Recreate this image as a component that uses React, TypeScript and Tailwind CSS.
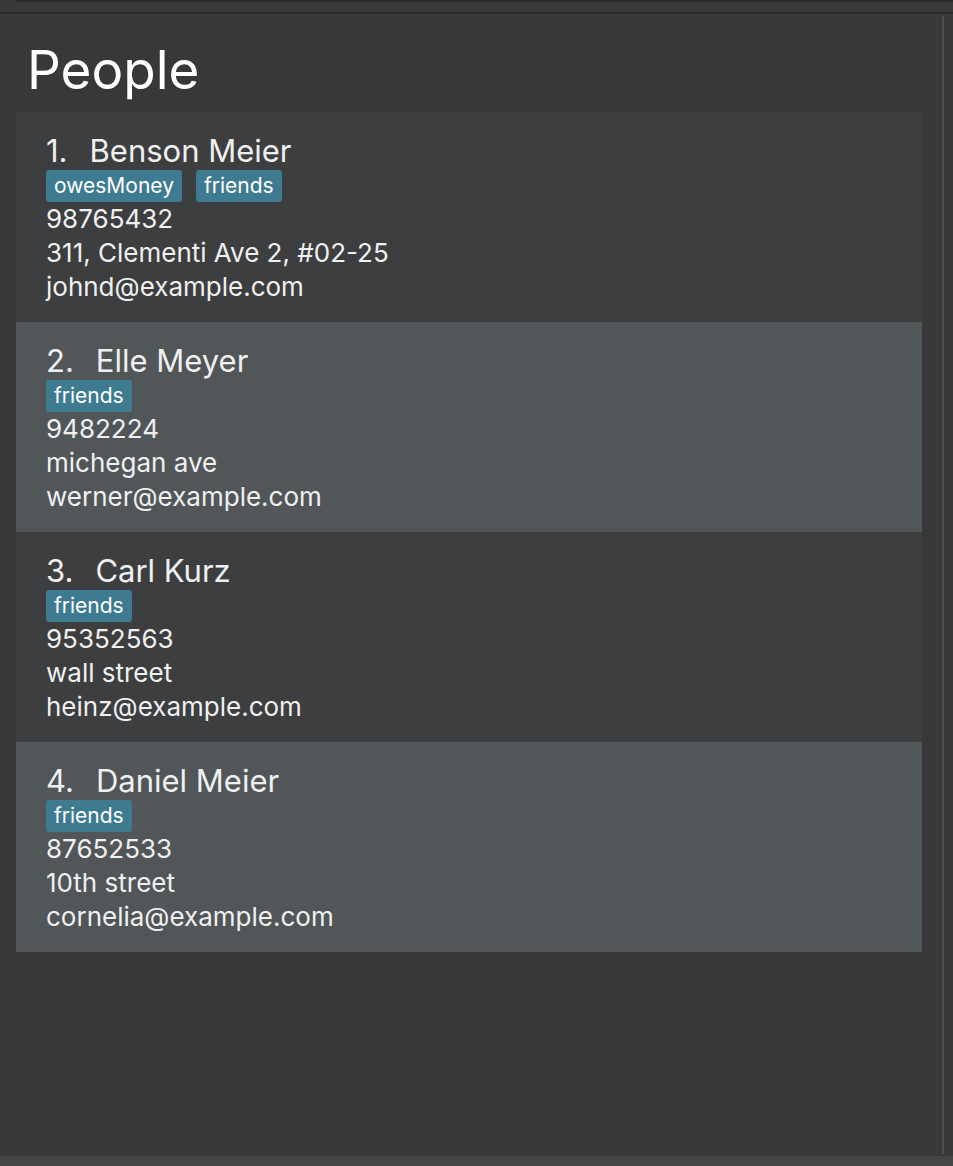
import React from "react";

type Person = {
  name: string;
  tags: string[];
  phone: string;
  address: string;
  email: string;
};

const people: Person[] = [
  {
    name: "Benson Meier",
    tags: ["owesMoney", "friends"],
    phone: "98765432",
    address: "311, Clementi Ave 2, #02-25",
    email: "johnd@example.com",
  },
  {
    name: "Elle Meyer",
    tags: ["friends"],
    phone: "9482224",
    address: "michegan ave",
    email: "werner@example.com",
  },
  {
    name: "Carl Kurz",
    tags: ["friends"],
    phone: "95352563",
    address: "wall street",
    email: "heinz@example.com",
  },
  {
    name: "Daniel Meier",
    tags: ["friends"],
    phone: "87652533",
    address: "10th street",
    email: "cornelia@example.com",
  },
];

function PersonCard({ person, index }: { person: Person; index: number }) {
  const bg = index % 2 === 0 ? "bg-[#3c3e3f]" : "bg-[#515658]";
  return (
    <li className={`${bg} h-[210px] px-[30px] pt-[24px] text-[#f0f0f0]`}>
      <div className="flex gap-[22px] text-[31px] leading-[30px]">
        <span>{index + 1}.</span>
        <span>{person.name}</span>
      </div>
      <div className="mt-[4px] flex gap-[14px]">
        {person.tags.map((tag) => (
          <span
            key={tag}
            className="h-[32px] rounded-[3px] bg-[#3e7b91] px-[8px] text-[21px] leading-[32px] text-white"
          >
            {tag}
          </span>
        ))}
      </div>
      <div className="text-[26px] leading-[34px]">
        <p>{person.phone}</p>
        <p>{person.address}</p>
        <p>{person.email}</p>
      </div>
    </li>
  );
}

export default function App() {
  return (
    <div className="flex h-[1166px] w-[953px] flex-col bg-[#383838] font-['Inter',sans-serif]">
      <div className="ml-[16px] h-[2px] bg-[#2b2b2b]" />
      <div className="h-[10px]" />
      <div className="h-[2px] bg-[#2b2b2b]" />
      <div className="flex flex-1">
        <main className="w-[922px] pl-[16px]">
          <h1 className="pl-[11px] pt-[30px] pb-[16px] text-[53px] leading-[52px] text-white">
            People
          </h1>
          <ul>
            {people.map((p, i) => (
              <PersonCard key={p.name} person={p} index={i} />
            ))}
          </ul>
        </main>
        <div className="ml-[20px] mt-[2px] mb-[2px] w-[2px] bg-[#4d4d4d]" />
      </div>
      <div className="h-[10px] bg-[#444444]" />
    </div>
  );
}
